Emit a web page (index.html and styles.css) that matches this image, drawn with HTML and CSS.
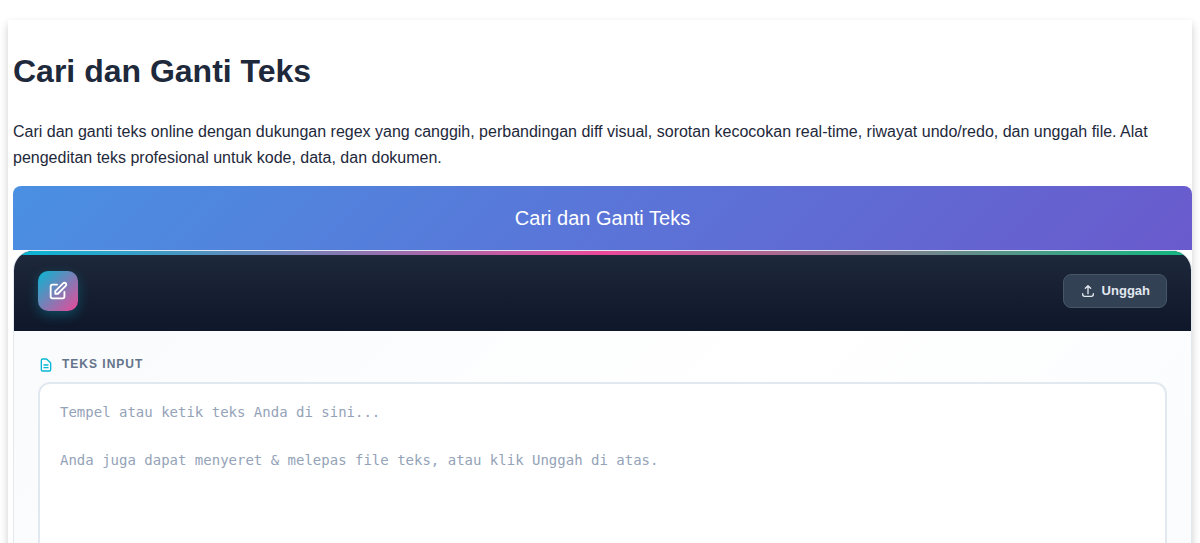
FILE: index.html
```html
<!DOCTYPE html>
<html lang="id">
<head>
    <meta charset="UTF-8">
    <meta name="viewport" content="width=device-width, initial-scale=1.0">
    <title>Cari dan Ganti Teks</title>
    <link rel="stylesheet" href="styles.css">
</head>
<body>
    <main class="container">
        <h1>Cari dan Ganti Teks</h1>
        <p class="intro">Cari dan ganti teks online dengan dukungan regex yang canggih, perbandingan diff visual, sorotan kecocokan real-time, riwayat undo/redo, dan unggah file. Alat pengeditan teks profesional untuk kode, data, dan dokumen.</p>

        <div class="banner">Cari dan Ganti Teks</div>

        <section class="tool">
            <div class="tool-header">
                <div class="tool-logo">
                    <svg width="22" height="22" viewBox="0 0 24 24" fill="none" stroke="currentColor" stroke-width="2" stroke-linecap="round" stroke-linejoin="round" aria-hidden="true">
                        <path d="M11 5H6a2 2 0 0 0-2 2v11a2 2 0 0 0 2 2h11a2 2 0 0 0 2-2v-5m-1.414-9.414a2 2 0 1 1 2.828 2.828L11.828 15H9v-2.828l8.586-8.586z"/>
                    </svg>
                </div>
                <button type="button" class="upload-btn">
                    <svg width="16" height="16" viewBox="0 0 24 24" fill="none" stroke="currentColor" stroke-width="2" stroke-linecap="round" stroke-linejoin="round" aria-hidden="true">
                        <path d="M4 16v1a3 3 0 0 0 3 3h10a3 3 0 0 0 3-3v-1M16 8l-4-4-4 4M12 4v12"/>
                    </svg>
                    Unggah
                </button>
            </div>

            <div class="tool-body">
                <label class="field-label" for="input-text">
                    <svg width="16" height="16" viewBox="0 0 24 24" fill="none" stroke="currentColor" stroke-width="2" stroke-linecap="round" stroke-linejoin="round" aria-hidden="true">
                        <path d="M9 12h6m-6 4h6m2 5H7a2 2 0 0 1-2-2V5a2 2 0 0 1 2-2h5.586a1 1 0 0 1 .707.293l5.414 5.414a1 1 0 0 1 .293.707V19a2 2 0 0 1-2 2z"/>
                    </svg>
                    Teks Input
                </label>
                <textarea id="input-text" class="text-input" spellcheck="false" placeholder="Tempel atau ketik teks Anda di sini...&#10;&#10;Anda juga dapat menyeret &amp; melepas file teks, atau klik Unggah di atas."></textarea>
            </div>
        </section>
    </main>
</body>
</html>
```
FILE: styles.css
```css
* {
    box-sizing: border-box;
}

body {
    margin: 0;
    padding: 20px 8px;
    color: #1e293b;
    font-family: "Liberation Sans", Arial, sans-serif;
    font-size: 16px;
    line-height: 26px;
}

.container {
    position: relative;
    padding: 5px 0 0 5px;
    background-color: #fff;
    box-shadow: 0 4px 8px rgba(0, 0, 0, 0.2);
}

h1 {
    margin: 0;
    padding: 20px 0 22px;
    font-size: 32px;
    line-height: 52px;
}

.intro {
    margin: 0 0 15px;
}

.banner {
    padding: 16px;
    border-radius: 8px 8px 0 0;
    background: linear-gradient(135deg, #4a90e2, #6a5acd);
    color: #fff;
    font-size: 20px;
    line-height: 32px;
    text-align: center;
}

.tool {
    overflow: hidden;
    border: 1px solid #e2e8f0;
    border-radius: 20px;
    background: linear-gradient(135deg, #f8fafc 0%, #fff 50%, #f8fafc 100%);
}

.tool-header {
    position: relative;
    display: flex;
    align-items: center;
    justify-content: space-between;
    padding: 20px 24px;
    background: linear-gradient(180deg, #1e293b, #0f172a);
}

/* coloured line along the top edge */
.tool-header::before {
    content: "";
    position: absolute;
    top: 0;
    left: 0;
    right: 0;
    height: 4px;
    background: linear-gradient(90deg, #06b6d4, #ec4899, #10b981);
}

.tool-logo {
    display: flex;
    align-items: center;
    justify-content: center;
    width: 40px;
    height: 40px;
    border-radius: 10px;
    background: linear-gradient(135deg, #06b6d4, #ec4899);
    box-shadow: 0 4px 12px rgba(6, 182, 212, 0.3);
    color: #fff;
}

.upload-btn {
    display: flex;
    align-items: center;
    gap: 6px;
    padding: 8px 16px;
    border: 1px solid #475569;
    border-radius: 8px;
    background-color: #334155;
    color: #e2e8f0;
    font-family: inherit;
    font-size: 13px;
    font-weight: 600;
    line-height: 16px;
    cursor: pointer;
}

.upload-btn:hover {
    background-color: #475569;
}

.tool-body {
    padding: 24px;
}

.field-label {
    display: flex;
    align-items: center;
    gap: 8px;
    margin-bottom: 8px;
    color: #64748b;
    font-size: 12px;
    font-weight: 700;
    letter-spacing: 1px;
    line-height: 19px;
    text-transform: uppercase;
}

.field-label svg {
    color: #06b6d4;
}

.text-input {
    display: block;
    width: 100%;
    min-height: 400px;
    padding: 16px 20px;
    border: 2px solid #e2e8f0;
    border-radius: 12px;
    background-color: #fff;
    color: #1e293b;
    font-family: "DejaVu Sans Mono", monospace;
    font-size: 14px;
    line-height: 24px;
    resize: vertical;
}

.text-input::placeholder {
    color: #94a3b8;
}

.text-input:focus {
    border-color: #06b6d4;
    outline: none;
}
```
